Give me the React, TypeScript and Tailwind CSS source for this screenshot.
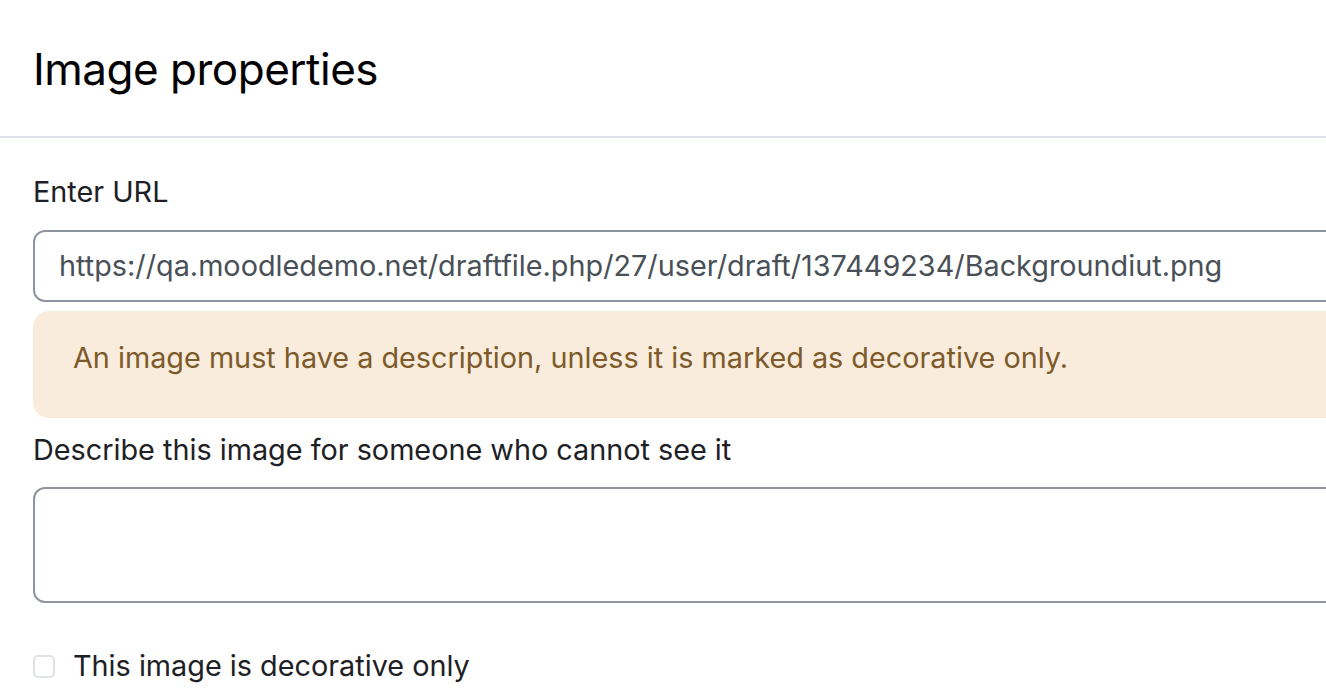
export default function App() {
  return (
    <div className="w-[1326px] h-[696px] overflow-hidden bg-white font-['Inter','Liberation_Sans',sans-serif]">
      {/* Header */}
      <div className="h-[138px] flex items-center pl-[33px] border-b-2 border-[#dee2e6]">
        <h1 className="text-[44px] leading-[56px] text-black tracking-[-0.5px] mt-[2px]">Image properties</h1>
      </div>

      {/* Body */}
      <div className="pl-[33px] w-[1400px]">
        <label className="block mt-[36px] text-[28.8px] leading-[36px] text-[#1d2125]">Enter URL</label>
        <div className="mt-[20px] h-[72px] border-2 border-[#8f959e] rounded-[12px] flex items-center px-[24px]">
          <span className="text-[28.8px] leading-[36px] text-[#495057]">
            https://qa.moodledemo.net/draftfile.php/27/user/draft/137449234/Backgroundiut.png
          </span>
        </div>

        <div className="mt-[9px] h-[107px] rounded-[16px] bg-[#f9ecdd] pl-[40px] pt-[29px]">
          <p className="text-[28.8px] leading-[36px] text-[#7d5a29]">
            An image must have a description, unless it is marked as decorative only.
          </p>
        </div>

        <label className="block mt-[14px] text-[28.8px] leading-[36px] text-[#1d2125]">
          Describe this image for someone who cannot see it
        </label>
        <div className="mt-[19px] h-[116px] border-2 border-[#8f959e] rounded-[12px]" />

        <div className="mt-[45px] flex items-center gap-[18px]">
          <div className="w-[22px] h-[23px] border-2 border-[#dee2e6] rounded-[5px] bg-white" />
          <span className="text-[28.8px] leading-[36px] text-[#1d2125]">This image is decorative only</span>
        </div>
      </div>
    </div>
  );
}
